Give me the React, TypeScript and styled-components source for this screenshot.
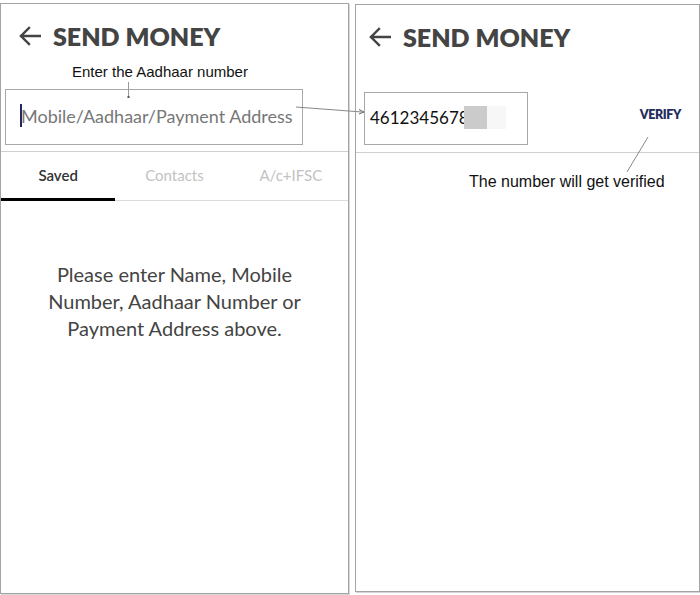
import styled, { createGlobalStyle } from "styled-components";

const GlobalStyle = createGlobalStyle`
  html, body {
    margin: 0;
    padding: 0;
    background: #ffffff;
  }
  body {
    font-family: Lato, "Noto Sans", sans-serif;
  }
`;

const Page = styled.div`
  position: relative;
  width: 700px;
  height: 595px;
  display: flex;
  align-items: flex-start;
  gap: 6px;
  overflow: hidden;
`;

const Panel = styled.div<{ $top: number; $width: number; $height: number }>`
  box-sizing: border-box;
  margin-top: ${(p) => p.$top}px;
  width: ${(p) => p.$width}px;
  height: ${(p) => p.$height}px;
  border: 1px solid #a4a4a4;
  box-shadow: 1px 1px 0 #d6d6d6;
  display: flex;
  flex-direction: column;
  background: #fff;
`;

const Header = styled.div<{ $padLeft: number }>`
  height: 64px;
  display: flex;
  align-items: center;
  gap: 12px;
  padding-left: ${(p) => p.$padLeft}px;
  color: #444;
`;

const Title = styled.h1`
  margin: 0;
  font-family: Lato, "Noto Sans", sans-serif;
  font-weight: 800;
  font-size: 25px;
  letter-spacing: 0;
  color: #444;
  padding-bottom: 1px;
`;

const InputSection = styled.div<{ $padTop: number; $padLeft: number }>`
  height: 84px;
  box-sizing: border-box;
  padding: ${(p) => p.$padTop}px 18px 0 ${(p) => p.$padLeft}px;
  border-bottom: 1px solid #cfcfcf;
  display: flex;
  align-items: flex-start;
  justify-content: space-between;
`;

const InputBox = styled.div<{ $width: number; $height: number; $padLeft: number }>`
  box-sizing: border-box;
  width: ${(p) => p.$width}px;
  height: ${(p) => p.$height}px;
  border: 1px solid #a8a8a8;
  display: flex;
  align-items: center;
  padding-left: ${(p) => p.$padLeft}px;
  padding-bottom: 3px;
`;

const Caret = styled.span`
  width: 2px;
  height: 23px;
  background: #1f2a60;
  flex-shrink: 0;
`;

const Placeholder = styled.span`
  font-size: 18px;
  color: #777;
  white-space: nowrap;
  margin-left: -1px;
`;

const Typed = styled.span`
  font-size: 17px;
  color: #111;
  white-space: nowrap;
  display: inline-flex;
  align-items: center;
`;

const Mask = styled.span<{ $shade: string; $width: number; $overlap?: number }>`
  position: relative;
  display: inline-block;
  width: ${(p) => p.$width}px;
  height: 23px;
  margin-left: ${(p) => -(p.$overlap ?? 0)}px;
  background: ${(p) => p.$shade};
`;

const VerifyButton = styled.span`
  margin-top: 15px;
  font-weight: 800;
  font-size: 12.5px;
  color: #1f2d5c;
  letter-spacing: -0.4px;
`;

const Tabs = styled.div`
  display: flex;
  height: 49px;
  box-sizing: border-box;
  border-bottom: 1px solid #dcdcdc;
`;

const Tab = styled.div<{ $active?: boolean }>`
  flex: 1;
  display: flex;
  align-items: center;
  justify-content: center;
  box-sizing: border-box;
  padding-left: ${(p) => (p.$active ? "0" : "2px")};
  font-size: 15px;
  font-weight: ${(p) => (p.$active ? 600 : 400)};
  color: ${(p) => (p.$active ? "#333" : "#c2c2c2")};
  border-bottom: 3px solid ${(p) => (p.$active ? "#000" : "transparent")};
  margin-bottom: -1px;
`;

const Message = styled.p`
  margin: 60px 0 0;
  text-align: center;
  font-size: 20px;
  line-height: 27px;
  color: #444;
`;

const Callout = styled.div<{ $x: number; $y: number }>`
  position: absolute;
  left: ${(p) => p.$x}px;
  top: ${(p) => p.$y}px;
  font-family: "Liberation Sans", Arial, sans-serif;
  color: #111;
  white-space: nowrap;
`;

const CalloutText = styled.span<{ $size: number }>`
  font-size: ${(p) => p.$size}px;
`;

const Overlay = styled.svg`
  position: absolute;
  left: 0;
  top: 0;
  pointer-events: none;
`;

function BackArrow() {
  return (
    <svg width="23" height="20" viewBox="0 0 23 20" fill="none">
      <path
        d="M22 10H3M11 2L3 10L11 18"
        stroke="#444"
        strokeWidth="2.4"
        strokeLinecap="square"
      />
    </svg>
  );
}

function ScreenHeader({ padLeft }: { padLeft: number }) {
  return (
    <Header $padLeft={padLeft}>
      <BackArrow />
      <Title>SEND MONEY</Title>
    </Header>
  );
}

export default function App() {
  return (
    <>
      <GlobalStyle />
      <Page>
        <Panel $top={3} $width={349} $height={591}>
          <ScreenHeader padLeft={17} />
          <InputSection $padTop={21} $padLeft={4}>
            <InputBox $width={298} $height={56} $padLeft={14}>
              <Caret />
              <Placeholder>Mobile/Aadhaar/Payment Address</Placeholder>
            </InputBox>
          </InputSection>
          <Tabs>
            <Tab $active>Saved</Tab>
            <Tab>Contacts</Tab>
            <Tab>A/c+IFSC</Tab>
          </Tabs>
          <Message>
            Please enter Name, Mobile
            <br />
            Number, Aadhaar Number or
            <br />
            Payment Address above.
          </Message>
        </Panel>

        <Panel $top={4} $width={345} $height={588}>
          <ScreenHeader padLeft={12} />
          <InputSection $padTop={23} $padLeft={8}>
            <InputBox $width={164} $height={53} $padLeft={5}>
              <Typed>
                4612345678
                <Mask $shade="#cbcbcb" $width={23} $overlap={5} />
                <Mask $shade="#f7f7f7" $width={19} />
              </Typed>
            </InputBox>
            <VerifyButton>VERIFY</VerifyButton>
          </InputSection>
        </Panel>

        <Callout $x={72} $y={63}>
          <CalloutText $size={15}>Enter the Aadhaar number</CalloutText>
        </Callout>
        <Callout $x={469} $y={173}>
          <CalloutText $size={16}>The number will get verified</CalloutText>
        </Callout>

        <Overlay width="700" height="595" viewBox="0 0 700 595">
          <line x1="128.5" y1="82" x2="128.5" y2="97" stroke="#999" strokeWidth="1" />
          <rect x="127.5" y="96" width="2" height="2" fill="#555" />
          <line x1="296" y1="107" x2="362" y2="112" stroke="#888" strokeWidth="1" />
          <path d="M359 109.5L364 112L359 114" stroke="#666" strokeWidth="1" fill="none" />
          <line x1="648" y1="137" x2="627" y2="172" stroke="#888" strokeWidth="1" />
        </Overlay>
      </Page>
    </>
  );
}
